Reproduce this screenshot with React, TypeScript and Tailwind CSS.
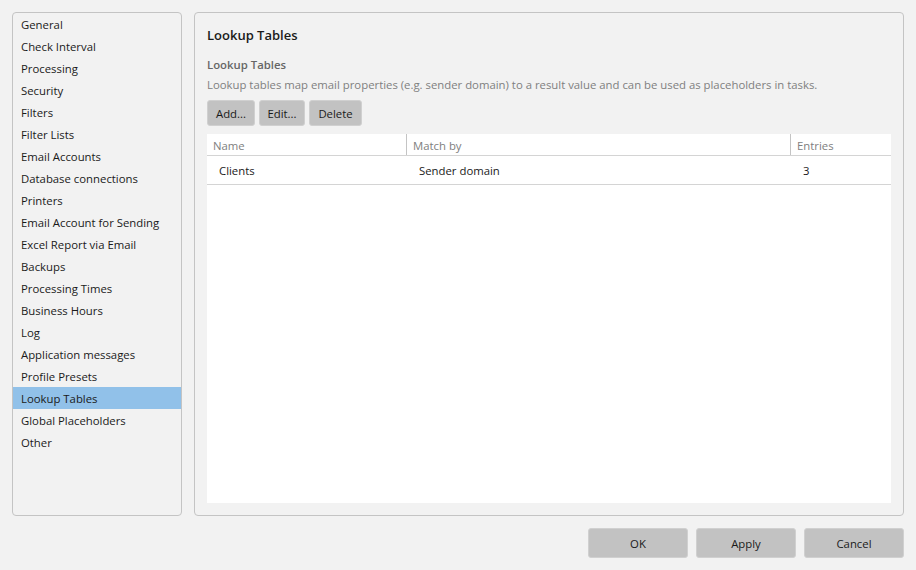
const navItems = [
  'General',
  'Check Interval',
  'Processing',
  'Security',
  'Filters',
  'Filter Lists',
  'Email Accounts',
  'Database connections',
  'Printers',
  'Email Account for Sending',
  'Excel Report via Email',
  'Backups',
  'Processing Times',
  'Business Hours',
  'Log',
  'Application messages',
  'Profile Presets',
  'Lookup Tables',
  'Global Placeholders',
  'Other',
]

export default function App() {
  return (
    <div className="flex h-[570px] w-[916px] flex-col overflow-hidden bg-[#f2f2f2] px-3 pt-3 font-['Open_Sans',sans-serif] text-[11.35px] text-[#1a1a1a]">
      <div className="flex h-[504px] gap-3">
        <ul className="h-full w-[170px] rounded-[4px] border border-[#c4c4c4]">
          {navItems.map((item) => (
            <li
              key={item}
              className={`flex h-[22px] items-center pt-[2px] pl-2 ${item === 'Lookup Tables' ? 'bg-[#91c1e9]' : ''}`}
            >
              {item}
            </li>
          ))}
        </ul>

        <section className="flex h-full w-[710px] flex-col rounded-[4px] border border-[#c4c4c4] px-3 pt-3">
          <h1 className="h-[20px] text-[13px] leading-[20px] font-semibold text-[#1a1a1a]">Lookup Tables</h1>
          <h2 className="mt-[12px] h-[16px] leading-[16px] font-semibold text-[#666666]">Lookup Tables</h2>
          <p className="mt-[4px] h-[16px] leading-[16px] text-[#808080]">
            Lookup tables map email properties (e.g. sender domain) to a result value and can be used as placeholders in tasks.
          </p>
          <div className="mt-[7px] flex gap-1">
            <button className="h-[26px] w-[48px] rounded-[3px] border border-[#d0d0d0] bg-[#c2c2c2] pt-px">Add...</button>
            <button className="h-[26px] w-[46px] rounded-[3px] border border-[#d0d0d0] bg-[#c2c2c2] pt-px">Edit...</button>
            <button className="h-[26px] w-[53px] rounded-[3px] border border-[#d0d0d0] bg-[#c2c2c2] pt-px">Delete</button>
          </div>

          <div className="mt-2 h-[369px] w-[684px] bg-white">
            <div className="grid h-[22px] grid-cols-[200px_384px_100px] border-b border-[#d4d4d4] text-[#808080]">
              <div className="flex items-center border-r border-[#c4c4c4] pt-[2px] pl-[6px]">Name</div>
              <div className="flex items-center border-r border-[#c4c4c4] pt-[2px] pl-[6px]">Match by</div>
              <div className="flex items-center pt-[2px] pl-[6px]">Entries</div>
            </div>
            <div className="grid h-[29px] grid-cols-[200px_384px_100px] border-b border-[#d4d4d4]">
              <div className="flex items-center pt-[2px] pl-3">Clients</div>
              <div className="flex items-center pt-[2px] pl-3">Sender domain</div>
              <div className="flex items-center pt-[2px] pl-3">3</div>
            </div>
          </div>
        </section>
      </div>

      <div className="mt-3 flex justify-end gap-2">
        <button className="h-[30px] w-[100px] rounded-[3px] border border-[#d0d0d0] bg-[#c2c2c2] pt-[2px]">OK</button>
        <button className="h-[30px] w-[100px] rounded-[3px] border border-[#d0d0d0] bg-[#c2c2c2] pt-[2px]">Apply</button>
        <button className="h-[30px] w-[100px] rounded-[3px] border border-[#d0d0d0] bg-[#c2c2c2] pt-[2px]">Cancel</button>
      </div>
    </div>
  )
}
